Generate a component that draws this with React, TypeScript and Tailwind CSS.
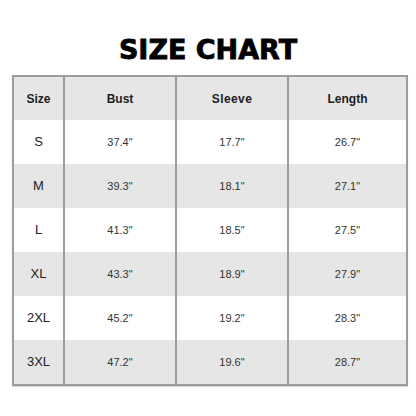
import React from "react";

const rows = [
  ["S", "37.4\"", "17.7\"", "26.7\""],
  ["M", "39.3\"", "18.1\"", "27.1\""],
  ["L", "41.3\"", "18.5\"", "27.5\""],
  ["XL", "43.3\"", "18.9\"", "27.9\""],
  ["2XL", "45.2\"", "19.2\"", "28.3\""],
  ["3XL", "47.2\"", "19.6\"", "28.7\""],
];

const cols = "grid grid-cols-[49px_112px_112px_119px]";

export default function App() {
  return (
    <div className="w-[416px] h-[416px] bg-white flex flex-col items-center pt-[34px] font-['Liberation_Sans',Arial,sans-serif]">
      <h1 className="font-['DejaVu_Sans',sans-serif] font-bold text-[27px] leading-[32px] text-black [-webkit-text-stroke:0.8px_black]">
        SIZE CHART
      </h1>
      <div className="mt-[9px] self-start ml-[12px] w-[396px] border-2 border-[#9c9c9c] shadow-[0_1px_1px_rgba(0,0,0,0.15)]">
        <div className={`${cols} h-[43px] bg-[#e6e6e6] text-[12px] font-bold text-[#1e1e1e]`}>
          <div className="flex items-center justify-center">Size</div>
          <div className="flex items-center justify-center border-l-2 border-[#9c9c9c]">Bust</div>
          <div className="flex items-center justify-center border-l-2 border-[#9c9c9c] tracking-[0.4px]">Sleeve</div>
          <div className="flex items-center justify-center border-l-2 border-[#9c9c9c]">Length</div>
        </div>
        {rows.map((r, i) => (
          <div
            key={r[0]}
            className={`${cols} h-[44px] ${i % 2 === 1 ? "bg-[#e6e6e6]" : "bg-white"}`}
          >
            <div className="flex items-center justify-center text-[13px] text-[#222]">{r[0]}</div>
            <div className="flex items-center justify-center border-l-2 border-[#9c9c9c] text-[11px] text-[#333]">{r[1]}</div>
            <div className="flex items-center justify-center border-l-2 border-[#9c9c9c] text-[11px] text-[#333]">{r[2]}</div>
            <div className="flex items-center justify-center border-l-2 border-[#9c9c9c] text-[11px] text-[#333]">{r[3]}</div>
          </div>
        ))}
      </div>
    </div>
  );
}
